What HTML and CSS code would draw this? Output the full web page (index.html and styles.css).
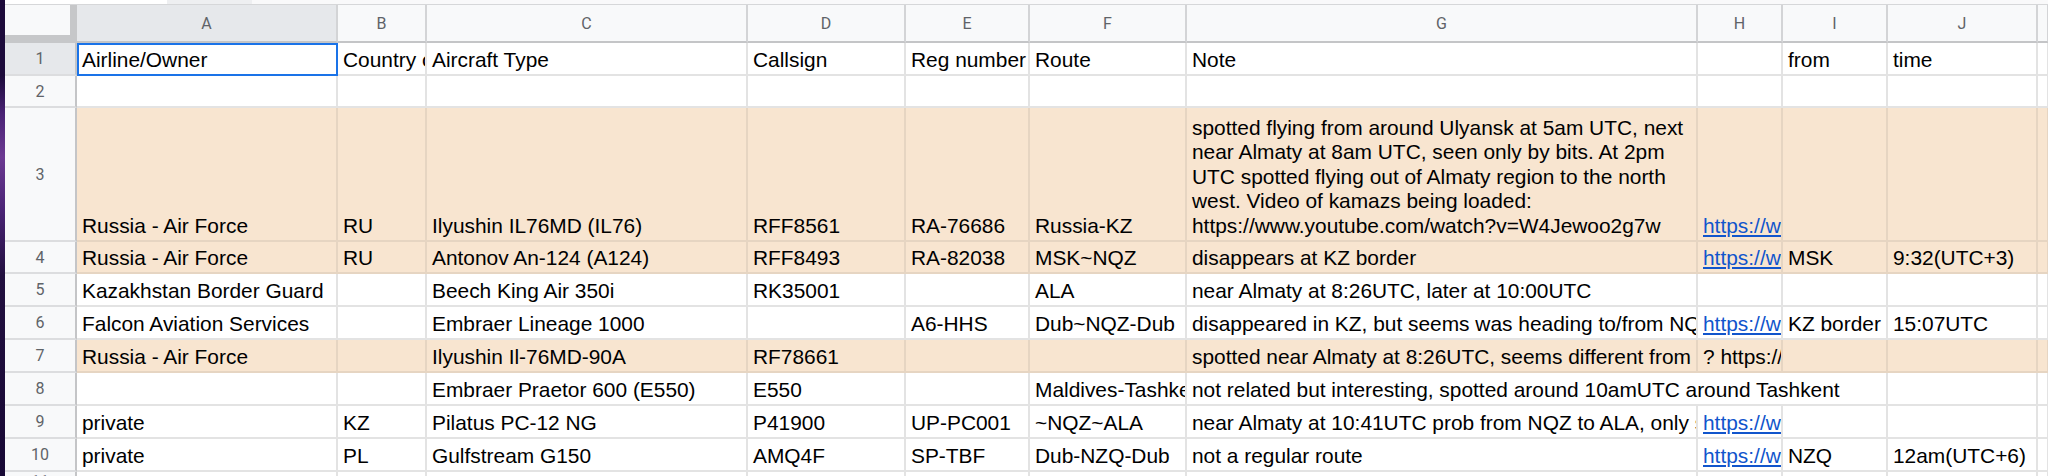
FILE: index.html
```html
<!DOCTYPE html>
<html lang="en">
<head>
<meta charset="utf-8">
<title>Aircraft spotting sheet</title>
<link rel="stylesheet" href="styles.css">
</head>
<body>
<div class="desk"></div>
<div class="app">
  <div class="topbar"><span class="tb-a"></span><span class="tb-b"></span><span class="tb-c"></span></div>
  <div class="sheet">
    <!-- column headers -->
    <div class="corner"></div>
    <div class="ch sel">A</div>
    <div class="ch">B</div>
    <div class="ch">C</div>
    <div class="ch">D</div>
    <div class="ch">E</div>
    <div class="ch">F</div>
    <div class="ch">G</div>
    <div class="ch">H</div>
    <div class="ch">I</div>
    <div class="ch">J</div>
    <div class="ch"></div>

    <!-- row 1 -->
    <div class="rh sel">1</div>
    <div class="c a1">Airline/Owner</div>
    <div class="c">Country of origin</div>
    <div class="c">Aircraft Type</div>
    <div class="c">Callsign</div>
    <div class="c">Reg number</div>
    <div class="c">Route</div>
    <div class="c">Note</div>
    <div class="c"></div>
    <div class="c">from</div>
    <div class="c">time</div>
    <div class="c"></div>

    <!-- row 2 -->
    <div class="rh">2</div>
    <div class="c"></div><div class="c"></div><div class="c"></div><div class="c"></div><div class="c"></div>
    <div class="c"></div><div class="c"></div><div class="c"></div><div class="c"></div><div class="c"></div><div class="c"></div>

    <!-- row 3 -->
    <div class="rh">3</div>
    <div class="c o">Russia - Air Force</div>
    <div class="c o">RU</div>
    <div class="c o">Ilyushin IL76MD (IL76)</div>
    <div class="c o">RFF8561</div>
    <div class="c o">RA-76686</div>
    <div class="c o">Russia-KZ</div>
    <div class="c o wrap">spotted flying from around Ulyansk at 5am UTC, next near Almaty at 8am UTC, seen only by bits. At 2pm UTC spotted flying out of Almaty region to the north west. Video of kamazs being loaded: https://www.youtube.com/watch?v=W4Jewoo2g7w</div>
    <div class="c o"><span class="lnk">https://www.flightradar24.com/</span></div>
    <div class="c o"></div>
    <div class="c o"></div>
    <div class="c o"></div>

    <!-- row 4 -->
    <div class="rh">4</div>
    <div class="c o">Russia - Air Force</div>
    <div class="c o">RU</div>
    <div class="c o">Antonov An-124 (A124)</div>
    <div class="c o">RFF8493</div>
    <div class="c o">RA-82038</div>
    <div class="c o">MSK~NQZ</div>
    <div class="c o">disappears at KZ border</div>
    <div class="c o"><span class="lnk">https://www.flightradar24.com/</span></div>
    <div class="c o">MSK</div>
    <div class="c o">9:32(UTC+3)</div>
    <div class="c o"></div>

    <!-- row 5 -->
    <div class="rh">5</div>
    <div class="c">Kazakhstan Border Guard</div>
    <div class="c"></div>
    <div class="c">Beech King Air 350i</div>
    <div class="c">RK35001</div>
    <div class="c"></div>
    <div class="c">ALA</div>
    <div class="c">near Almaty at 8:26UTC, later at 10:00UTC</div>
    <div class="c"></div>
    <div class="c"></div>
    <div class="c"></div>
    <div class="c"></div>

    <!-- row 6 -->
    <div class="rh">6</div>
    <div class="c">Falcon Aviation Services</div>
    <div class="c"></div>
    <div class="c">Embraer Lineage 1000</div>
    <div class="c"></div>
    <div class="c">A6-HHS</div>
    <div class="c">Dub~NQZ-Dub</div>
    <div class="c">disappeared in KZ, but seems was heading to/from NQZ</div>
    <div class="c"><span class="lnk">https://www.flightradar24.com/</span></div>
    <div class="c">KZ border</div>
    <div class="c">15:07UTC</div>
    <div class="c"></div>

    <!-- row 7 -->
    <div class="rh">7</div>
    <div class="c o">Russia - Air Force</div>
    <div class="c o"></div>
    <div class="c o">Ilyushin Il-76MD-90A</div>
    <div class="c o">RF78661</div>
    <div class="c o"></div>
    <div class="c o"></div>
    <div class="c o">spotted near Almaty at 8:26UTC, seems different from the one above</div>
    <div class="c o">? https://www.flightradar24.com/</div>
    <div class="c o"></div>
    <div class="c o"></div>
    <div class="c o"></div>

    <!-- row 8 -->
    <div class="rh">8</div>
    <div class="c"></div>
    <div class="c"></div>
    <div class="c">Embraer Praetor 600 (E550)</div>
    <div class="c">E550</div>
    <div class="c"></div>
    <div class="c">Maldives-Tashkent</div>
    <div class="c span3">not related but interesting, spotted around 10amUTC around Tashkent</div>
    <div class="c"></div>
    <div class="c"></div>

    <!-- row 9 -->
    <div class="rh">9</div>
    <div class="c">private</div>
    <div class="c">KZ</div>
    <div class="c">Pilatus PC-12 NG</div>
    <div class="c">P41900</div>
    <div class="c">UP-PC001</div>
    <div class="c">~NQZ~ALA</div>
    <div class="c">near Almaty at 10:41UTC prob from NQZ to ALA, only seen by bits</div>
    <div class="c"><span class="lnk">https://www.flightradar24.com/</span></div>
    <div class="c"></div>
    <div class="c"></div>
    <div class="c"></div>

    <!-- row 10 -->
    <div class="rh">10</div>
    <div class="c">private</div>
    <div class="c">PL</div>
    <div class="c">Gulfstream G150</div>
    <div class="c">AMQ4F</div>
    <div class="c">SP-TBF</div>
    <div class="c">Dub-NZQ-Dub</div>
    <div class="c">not a regular route</div>
    <div class="c"><span class="lnk">https://www.flightradar24.com/</span></div>
    <div class="c">NZQ</div>
    <div class="c">12am(UTC+6)</div>
    <div class="c"></div>

    <!-- row 11 (cut off) -->
    <div class="rh">11</div>
    <div class="c"></div><div class="c"></div><div class="c"></div><div class="c"></div><div class="c"></div>
    <div class="c"></div><div class="c"></div><div class="c"></div><div class="c"></div><div class="c"></div><div class="c"></div>
  </div>
</div>
</body>
</html>
```

FILE: styles.css
```css
html, body {
  margin: 0;
  padding: 0;
}

body {
  width: 2048px;
  height: 476px;
  overflow: hidden;
  display: flex;
  background: #ffffff;
  font-family: "Liberation Sans", Arial, sans-serif;
}

.desk {
  flex: none;
  width: 5px;
  background: linear-gradient(180deg, #1d0b3b 0%, #1d0b3b 16%, #4a2375 24%, #6c3a92 33%, #4b2476 44%, #22103f 58%, #180935 100%);
}

.app {
  flex: 1;
  min-width: 0;
  display: flex;
  flex-direction: column;
}

.topbar {
  flex: none;
  height: 5px;
  box-sizing: border-box;
  display: flex;
  background: #f9f9fa;
  border-bottom: 1px solid #d6d7d9;
}

.tb-a {
  width: 162px;
  background: #ffffff;
}

.tb-b {
  width: 85px;
  background: #eeeff1;
}

.tb-c {
  flex: 1;
}

.sheet {
  flex: 1;
  display: grid;
  grid-template-columns: 72px 261px 89px 321px 158px 124px 157px 511px 85px 105px 150px 1fr;
  grid-template-rows: 38px 33px 32px 134px 32px 33px 33px 33px 33px 33px 33px 1fr;
  overflow: hidden;
}

.corner {
  box-sizing: border-box;
  background: #f8f9fa;
  border-right: 7px solid #c6c7c9;
  border-bottom: 8px solid #c6c7c9;
}

.ch {
  box-sizing: border-box;
  display: flex;
  align-items: center;
  justify-content: center;
  background: #f8f9fa;
  border-right: 2px solid #d3d4d6;
  border-bottom: 2px solid #c4c5c7;
  font-family: Roboto, "Liberation Sans", sans-serif;
  font-size: 16px;
  color: #5f6368;
  padding-top: 1px;
}

.rh {
  box-sizing: border-box;
  display: flex;
  align-items: center;
  justify-content: center;
  background: #f8f9fa;
  border-right: 2px solid #c4c5c7;
  border-bottom: 2px solid #dcdddf;
  font-family: Roboto, "Liberation Sans", sans-serif;
  font-size: 16px;
  color: #5f6368;
}

.ch.sel,
.rh.sel {
  background: #e6e8eb;
}

.c {
  box-sizing: border-box;
  min-width: 0;
  display: flex;
  align-items: flex-end;
  overflow: hidden;
  white-space: nowrap;
  padding: 0 4px 2px 5px;
  border-right: 2px solid #e3e3e3;
  border-bottom: 2px solid #e3e3e3;
  font-size: 20.9px;
  line-height: 24.4px;
  color: #000000;
  background: #ffffff;
}

.c.o {
  background: #f8e5d0;
  border-color: #e6d5c2;
}

.c.wrap {
  white-space: normal;
}

.c.span3 {
  grid-column: span 3;
}

.c.a1 {
  outline: 2px solid #1a73e8;
  outline-offset: -2px;
}

.lnk {
  color: #1155cc;
  text-decoration: underline;
}
```
